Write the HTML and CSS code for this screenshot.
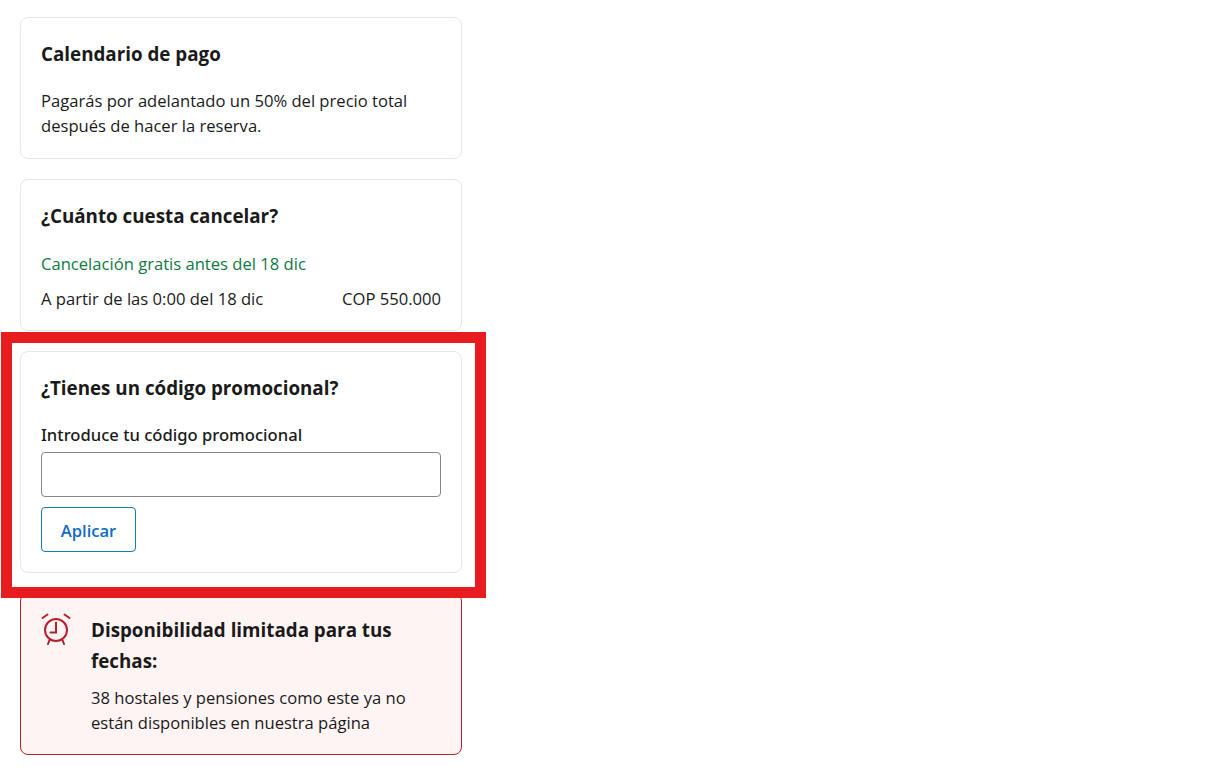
FILE: index.html
```html
<!DOCTYPE html>
<html lang="es">
<head>
    <meta charset="UTF-8" />
    <title>Reserva</title>
    <link rel="stylesheet" href="styles.css">
</head>
<body>
    <div class="column">
        <div class="card">
            <h3>Calendario de pago</h3>
            <p>Pagarás por adelantado un 50% del precio total después de hacer la reserva.</p>
        </div>

        <div class="card cancel">
            <h3>¿Cuánto cuesta cancelar?</h3>
            <p class="free">Cancelación gratis antes del 18 dic</p>
            <div class="fee-row">
                <span>A partir de las 0:00 del 18 dic</span>
                <span>COP 550.000</span>
            </div>
        </div>

        <div class="card promo">
            <h3>¿Tienes un código promocional?</h3>
            <label for="promo-code">Introduce tu código promocional</label>
            <input type="text" id="promo-code" autocomplete="off" />
            <button type="button">Aplicar</button>
            <div class="highlight"></div>
        </div>

        <div class="card alert">
            <svg class="alert-icon" viewBox="0 0 30 32" width="30" height="32" fill="none" stroke="#b3202c" stroke-width="2" stroke-linecap="round">
                <circle cx="15" cy="17" r="11" />
                <path d="M15 9.500V19.500H9.500" />
                <path d="M8.500 27L7 31M21.500 27L23 31" />
                <path d="M1.500 5L6.500 1.500M28.500 5L23.500 1.500" />
            </svg>
            <div>
                <h3>Disponibilidad limitada para tus fechas:</h3>
                <p>38 hostales y pensiones como este ya no están disponibles en nuestra página</p>
            </div>
        </div>
    </div>
</body>
</html>
```

FILE: styles.css
```css
body {
    margin: 0;
    font-family: "Open Sans", "Noto Sans", Arial, sans-serif;
    font-size: 16.6px;
    line-height: 24.5px;
    color: #1a1a1a;
    background: #fff;
}

.column {
    display: flex;
    flex-direction: column;
    gap: 20px;
    width: 442px;
    padding: 17px 0 0 20px;
}

.card {
    position: relative;
    padding: 20px;
    border: 1px solid #e7e7e7;
    border-radius: 8px;
}

.cancel {
    padding-bottom: 19px;
}

h3 {
    margin: 0 0 18px;
    font-size: 18.8px;
    line-height: 33px;
    font-weight: 700;
}

p {
    margin: 0;
}

.free {
    margin-bottom: 9px;
    line-height: 26.5px;
    color: #0f7a3f;
}

.fee-row {
    display: flex;
    justify-content: space-between;
}

label {
    display: block;
    margin-bottom: 4.5px;
    font-family: "Noto Sans", "Open Sans", Arial, sans-serif;
    font-weight: 500;
}

input {
    display: block;
    box-sizing: border-box;
    width: 100%;
    height: 45px;
    margin-bottom: 10px;
    border: 1px solid #868686;
    border-radius: 4px;
}

button {
    height: 45px;
    width: 95px;
    padding: 2px 0 0;
    border: 1px solid #1a78b8;
    border-radius: 4px;
    background: #fff;
    color: #0e6cc4;
    font: 600 16.6px "Open Sans", "Noto Sans", Arial, sans-serif;
}

/* red frame drawn over the promo card, it also covers the top of the alert */
.highlight {
    position: absolute;
    z-index: 1;
    left: -20px;
    top: -20px;
    width: 463px;
    height: 244px;
    border: 11px solid #e71c1f;
}

.alert {
    display: flex;
    gap: 20px;
    padding-top: 21px;
    padding-bottom: 19px;
    border-color: #b3202c;
    background: #fff4f4;
}

.alert-icon {
    flex-shrink: 0;
    margin-top: -2px;
}

.alert h3 {
    margin-bottom: 9px;
    line-height: 31px;
}
```
